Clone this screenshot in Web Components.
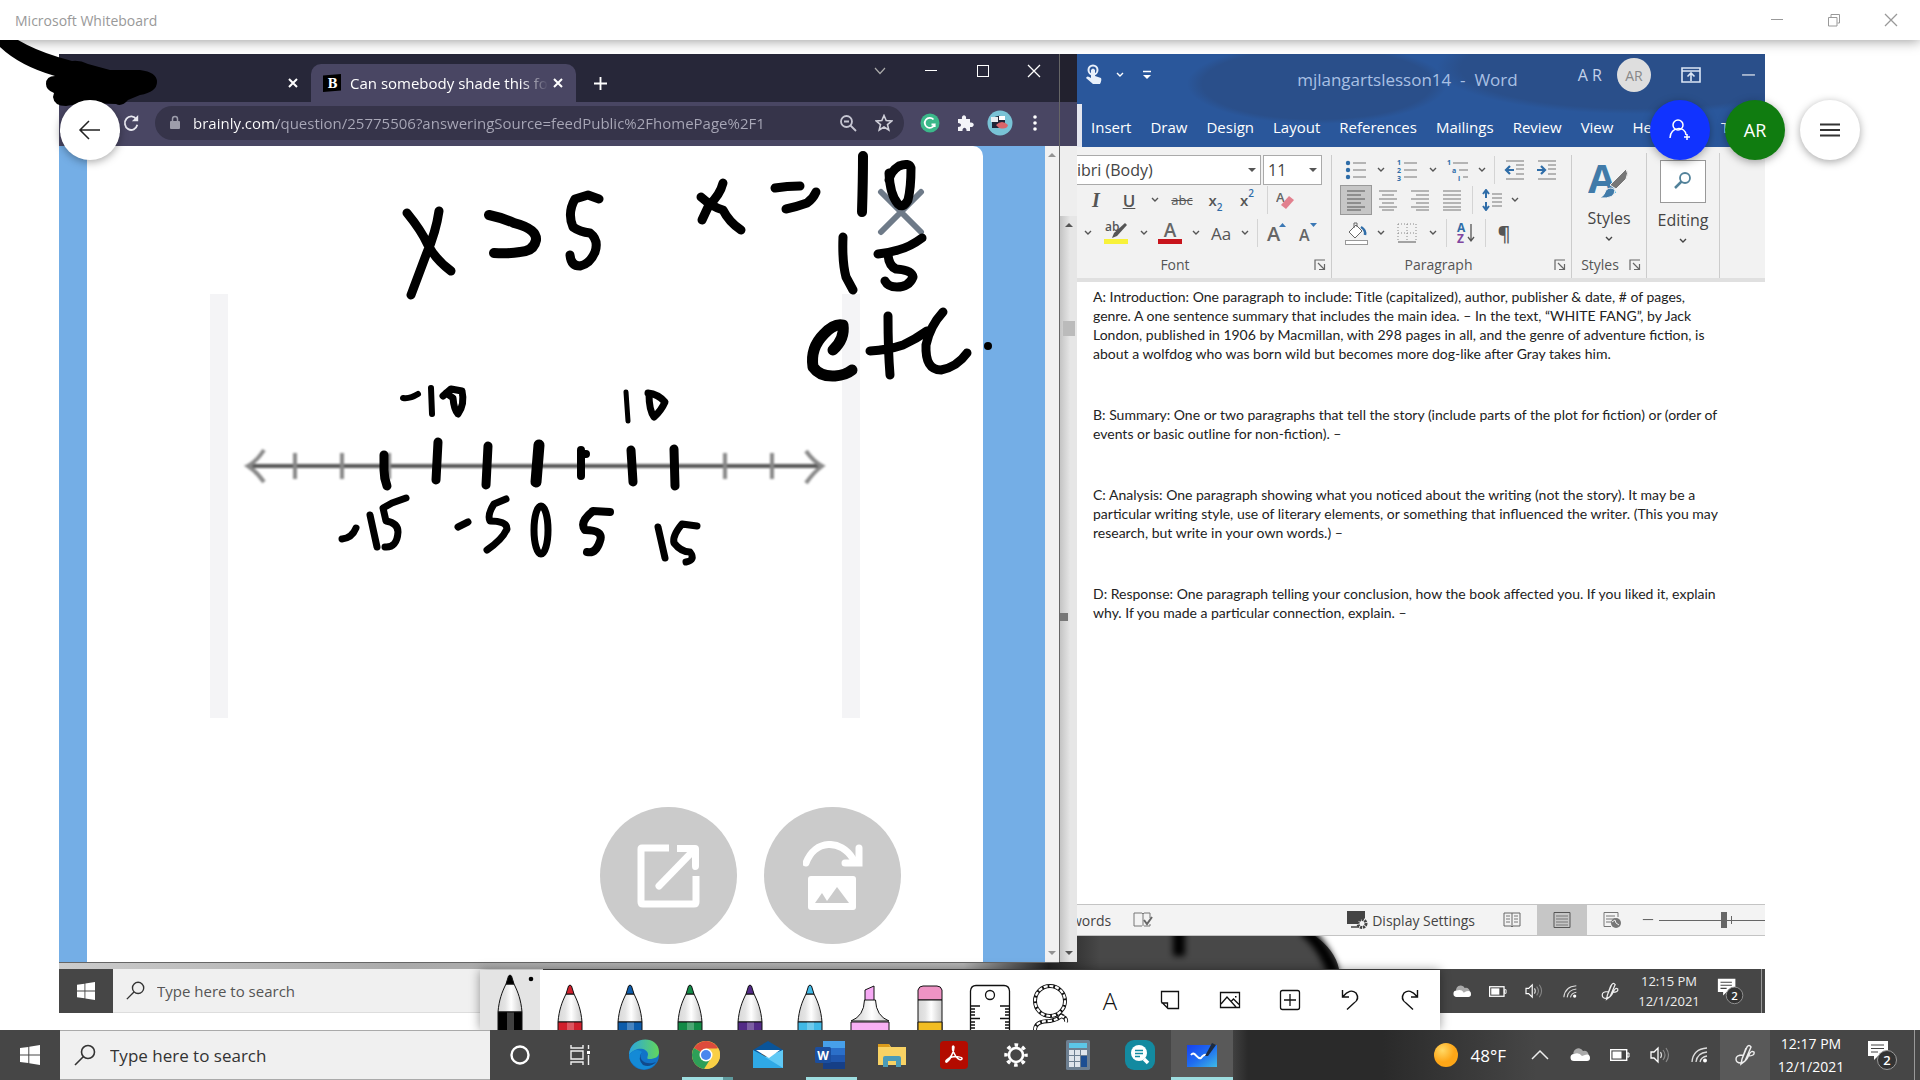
<!DOCTYPE html>
<html lang="en">
<head>
<meta charset="utf-8">
<title>Microsoft Whiteboard</title>
<style>
  html, body {
    margin: 0;
    height: 100%;
  }

  body {
    display: flex;
    flex-direction: column;
    background: #fff;
    font-family: "Open Sans", "Noto Sans", sans-serif;
    overflow: hidden;
  }
</style>
</head>
<body>

<app-titlebar>Microsoft Whiteboard</app-titlebar>

<white-board>
  <desktop-shot>
    <chrome-window slot="browser"></chrome-window>
    <word-window slot="editor">
      <p>A: Introduction: One paragraph to include: Title (capitalized), author, publisher &amp; date, # of pages,<br>genre. A one sentence summary that includes the main idea. – In the text, “WHITE FANG”, by Jack<br>London, published in 1906 by Macmillan, with 298 pages in all, and the genre of adventure fiction, is<br>about a wolfdog who was born wild but becomes more dog-like after Gray takes him.</p>
      <p>B: Summary: One or two paragraphs that tell the story (include parts of the plot for fiction) or (order of<br>events or basic outline for non-fiction). –</p>
      <p>C: Analysis: One paragraph showing what you noticed about the writing (not the story). It may be a<br>particular writing style, use of literary elements, or something that influenced the writer. (This you may<br>research, but write in your own words.) –</p>
      <p>D: Response: One paragraph telling your conclusion, how the book affected you. If you liked it, explain<br>why. If you made a particular connection, explain. –</p>
    </word-window>
  </desktop-shot>
  <ink-layer slot="ink"></ink-layer>
  <round-button slot="back" label="Back"><ui-icon name="back" w="24" h="24"></ui-icon></round-button>
  <round-button slot="actions" label="Invite" style="--bg: #1133ff; --fg: #fff"><ui-icon name="invite" w="24" h="24"></ui-icon></round-button>
  <round-button slot="actions" label="Account" style="--bg: #107c10; --fg: #fff">AR</round-button>
  <round-button slot="actions" label="Menu"><ui-icon name="menu" w="24" h="24"></ui-icon></round-button>
  <pen-toolbar slot="tools"></pen-toolbar>
</white-board>

<task-bar></task-bar>

<script>
// width and height of each drawing come first, then its markup
const pen = (color, y = 0) => `
  <path d="M18 ${y + 37}C19 ${y + 25} 22 ${y + 17} 26 ${y + 9}H34C38 ${y + 17} 41 ${y + 25} 42 ${y + 37}Z" fill="url(#barrel)" stroke="#111"/>
  <path d="M26 ${y + 9}L28.500 ${y + 1}Q30 ${y - 1} 31.500 ${y + 1}L34 ${y + 9}Z" fill="${color}" stroke="#111"/>
  <path d="M18 ${y + 37}H42V61H18Z" fill="${color}" stroke="#111"/>
  <path d="M27 ${y + 37.5}H34V60H27Z" fill="#fff" opacity=".25"/>`
const barrel = '<defs><linearGradient id="barrel"><stop offset="0" stop-color="#d8d8d8"/><stop offset=".3" stop-color="#e4e4e4"/><stop offset=".55" stop-color="#fff"/><stop offset=".8" stop-color="#e2e2e2"/><stop offset="1" stop-color="#ccc"/></linearGradient></defs>'
const lines = (ys, x1 = 2, x2 = 20) => ys.map(y => `<path d="M${x1} ${y}H${x2}"/>`).join('')
const grey = 'fill="none" stroke="#777"'

const icons = {
  back: [24, 24, '<path d="M22 12H3M11 3L2 12L11 21" fill="none" stroke="#222" stroke-width="1.5"/>'],
  invite: [24, 24, '<g fill="none" stroke="#fff" stroke-width="1.5"><circle cx="10" cy="7" r="5"/><path d="M2 20C2 8 18 8 18 17M16 19H22M19 16V22"/></g>'],
  menu: [24, 24, '<path d="M2 6.500H22M2 12H22M2 17.500H22" stroke="#333" stroke-width="2"/>'],
  minimize: [14, 14, '<path d="M1 6.500H13" stroke="currentColor"/>'],
  maximize: [14, 14, '<rect x="1.500" y="1.500" width="11" height="11" fill="none" stroke="currentColor"/>'],
  restore: [14, 14, '<path d="M1.500 4.500H10V13H1.500ZM4 4V1.500H12.500V10H10.500" fill="none" stroke="currentColor"/>'],
  close: [14, 14, '<path d="M1 1L13 13M13 1L1 13" stroke="currentColor" stroke-width="1.300"/>'],
  cross: [10, 10, '<path d="M1 1L9 9M9 1L1 9" stroke="currentColor" stroke-width="2"/>'],
  plus: [14, 14, '<path d="M7 0V14M0 7H14" stroke="currentColor" stroke-width="2"/>'],
  chevron: [12, 12, '<path d="M1 3L6 8.500L11 3" fill="none" stroke="#aaa" stroke-width="1.200"/>'],
  chevronUp: [18, 12, '<path d="M1 10L9 2L17 10" fill="none" stroke="#eee" stroke-width="1.500"/>'],
  smallChevron: [8, 8, '<path d="M1 2L4 5L7 2" fill="none" stroke="currentColor" stroke-width="1.400"/>'],
  reload: [20, 20, '<path d="M16 6A7 7.500 0 1 0 17 12" fill="none" stroke="#e8e8f0" stroke-width="2"/><path d="M18 1V8H11Z" fill="#e8e8f0"/>'],
  lock: [12, 16, '<rect x="1" y="6" width="10" height="8" rx="1" fill="#9d9dab"/><path d="M3.500 6V4A2.500 2.500 0 0 1 8.500 4V6" fill="none" stroke="#9d9dab" stroke-width="1.500"/>'],
  lens: [18, 18, '<g fill="none" stroke="#c6c6d2" stroke-width="1.800"><circle cx="7.500" cy="7.500" r="5.500"/><path d="M11.500 11.500L17 17M5 7.500H10"/></g>'],
  star: [18, 18, '<path d="M9 1.500L11.200 6.500L16.700 7L12.500 10.600L13.800 16L9 13L4.200 16L5.500 10.600L1.300 7L6.800 6.500Z" fill="none" stroke="#d0d0da" stroke-width="1.600"/>'],
  grammarly: [20, 20, '<circle cx="10" cy="10" r="9.500" fill="#3bb88a"/><path d="M13.500 6.500A5 5 0 1 0 14.500 11.500H11.500M14.700 11V14" fill="none" stroke="#fff" stroke-width="1.800"/>'],
  puzzle: [18, 18, '<path d="M2 5H6C5 0 11 0 10 5H14V8.500C19 7.500 19 14 14 13V17H10.500C11 12.500 6 12.500 6.500 17H2V13C6 13 6 9 2 9Z" fill="#f4f4f8"/>'],
  face: [26, 26, '<circle cx="13" cy="13" r="12.500" fill="#79c3d6"/><path d="M5 9Q12 3 18 8V18H5Z" fill="#202638"/><rect x="4" y="7" width="7" height="5" fill="#e8eef2"/><rect x="12" y="6" width="6" height="4" fill="#fff"/><path d="M9 15Q15 9 21 15Q20 20 12 18Z" fill="#d9656a"/>'],
  dots: [6, 18, '<g fill="#fff"><circle cx="3" cy="3" r="1.800"/><circle cx="3" cy="9" r="1.800"/><circle cx="3" cy="15" r="1.800"/></g>'],
  favicon: [18, 18, '<path d="M0 1.500L18 0V16.500L0 18Z" fill="#000"/><text x="9.500" y="13.500" text-anchor="middle" font-family="DejaVu Serif" font-weight="700" font-size="12" fill="#fff">B</text>'],
  dismiss: [48, 48, '<path d="M4 4L44 44M44 4L4 44" stroke="#6e7a88" stroke-width="6" stroke-linecap="round"/>'],
  external: [64, 64, '<g fill="none" stroke="#fff" stroke-width="7" stroke-linejoin="round"><path d="M32 4H5Q4 4 4 5V58Q4 60 6 60H57Q59 60 59 58V32"/><path d="M22 42L57 6" stroke-linecap="round"/></g><path d="M40 1H58Q62 1 62 5V22Q62 26 58 26Q55 26 55 22V8H40Z" fill="#fff"/>'],
  rotate: [60, 70, '<path d="M3 22C12 -2 38 -2 50 18" fill="none" stroke="#fff" stroke-width="7" stroke-linecap="round"/><path d="M56 7V22H42" fill="none" stroke="#fff" stroke-width="7" stroke-linecap="round"/><rect x="5" y="35" width="48" height="34" rx="3" fill="#fff"/><path d="M12 62L19 52L24 60L34 46L46 62Z" fill="#cbcbcb"/>'],

  touch: [18, 22, '<circle cx="8" cy="6" r="4.500" fill="none" stroke="#e8f0fa" stroke-width="2"/><path d="M6 6Q8 3 10 6V12L16 14Q17 16 15 20H8L1 14Q2 11 6 14Z" fill="#e8f0fa"/>'],
  quick: [10, 10, '<path d="M1 1.500H9" stroke="#fff" stroke-width="1.500"/><path d="M1 5H9L5 9Z" fill="#fff"/>'],
  ribbonMode: [20, 16, '<path d="M1 1H19V15H1ZM1 4H19M10 14V6M6.500 9.500L10 6L13.500 9.500" fill="none" stroke="#dbe6f5" stroke-width="1.600"/>'],
  caret: [8, 6, '<path d="M0 1H8L4 5Z" fill="#555"/>'],
  eraserA: [20, 20, '<text x="0" y="12" font-family="Open Sans" font-weight="600" font-size="13" fill="#666">A</text><path d="M5 15L13 6L18 10L10 19Z" fill="#e2808e"/>'],
  highlighter: [26, 24, '<text x="2" y="10" font-family="Open Sans" font-size="12" fill="#555">ab</text><path d="M9 17L11 12L22 2L24 4L14 15Z" fill="#555"/><rect x="1" y="18" width="24" height="5" fill="#f8f23a"/>'],
  fontColor: [26, 24, '<text x="13" y="16" text-anchor="middle" font-family="Open Sans" font-weight="600" font-size="19" fill="#666">A</text><rect x="1" y="18" width="24" height="5" fill="#c8141c"/>'],
  growA: [24, 24, '<text x="2" y="20" font-family="Open Sans" font-weight="600" font-size="20" fill="#666">A</text><path d="M14 6L17.500 2L21 6Z" fill="#3b78b5"/>'],
  shrinkA: [24, 24, '<text x="2" y="20" font-family="Open Sans" font-weight="600" font-size="16" fill="#666">A</text><path d="M13 2H20L16.500 6Z" fill="#3b78b5"/>'],
  bullets: [22, 22, `<g fill="#2f6da8"><circle cx="3" cy="4" r="2.200"/><circle cx="3" cy="11" r="2.200"/><circle cx="3" cy="18" r="2.200"/></g><g ${grey}>${lines([4, 11, 18], 8, 21)}</g>`],
  numbers: [22, 22, `<g fill="#2f6da8" font-family="Open Sans" font-size="7" font-weight="700"><text x="1" y="6">1</text><text x="1" y="14">2</text><text x="1" y="22">3</text></g><g ${grey}>${lines([4, 11, 18], 8, 21)}</g>`],
  levels: [22, 22, `<g fill="#2f6da8" font-family="Open Sans" font-size="7" font-weight="700"><text x="0" y="6">1</text><text x="5" y="14">a</text><text x="11" y="22">i</text></g><g ${grey}>${lines([4], 6, 21)}${lines([11], 12, 21)}${lines([18], 16, 21)}</g>`],
  outdent: [22, 22, `<g ${grey}>${lines([2, 20])}${lines([6, 10, 15], 12, 20)}</g><path d="M10 11H3M6 7L2 11L6 15" fill="none" stroke="#2f6da8" stroke-width="2.200"/>`],
  indent: [22, 22, `<g ${grey}>${lines([2, 20])}${lines([6, 10, 15], 12, 20)}</g><path d="M1 11H8M5 7L9 11L5 15" fill="none" stroke="#2f6da8" stroke-width="2.200"/>`],
  left: [22, 22, `<g fill="none" stroke="#555">${lines([2, 10, 18])}${lines([6, 14, 21], 2, 16)}</g>`],
  center: [22, 22, `<g ${grey}>${lines([2, 10, 18])}${lines([6, 14, 21], 5, 17)}</g>`],
  right: [22, 22, `<g ${grey}>${lines([2, 10, 18])}${lines([6, 14, 21], 7, 20)}</g>`],
  justify: [22, 22, `<g ${grey}>${lines([2, 6, 10, 14, 18, 21])}</g>`],
  spacing: [22, 22, `<path d="M5 1V9M5 13V21M2 5L5 1L8 5M2 17L5 21L8 17" fill="none" stroke="#2f6da8" stroke-width="2"/><g ${grey}>${lines([5, 9, 13, 17], 11, 21)}</g>`],
  bucket: [24, 24, '<path d="M5 11L12 4L18 10L11 17Z" fill="#fff" stroke="#666"/><path d="M10 7V2H13V6" fill="none" stroke="#666"/><path d="M17 6Q22 9 21 14" fill="none" stroke="#2f6da8" stroke-width="2.500"/><rect x="1.500" y="19.500" width="22" height="4" fill="#fff" stroke="#999"/>'],
  borders: [20, 20, '<path d="M1 1H19V19M1 1V19M10 1V19M1 10H19" fill="none" stroke="#888" stroke-dasharray="1 2"/><path d="M1 19H19" stroke="#555"/>'],
  sort: [20, 22, '<g font-family="Open Sans" font-weight="700" font-size="12"><text x="1" y="10" fill="#2f6da8">A</text><text x="1" y="21" fill="#8046a0">Z</text></g><path d="M15 2V19M12 15L15 19L18 15" fill="none" stroke="#555" stroke-width="1.300"/>'],
  launcher: [12, 12, '<path d="M1 11V1H11M4 4L10 10M10.500 5V10.500H5" fill="none" stroke="#666" stroke-width="1.200"/>'],
  stylesA: [42, 40, '<text x="0" y="32" font-family="Open Sans" font-weight="700" font-size="40" fill="#417ba9">A</text><path d="M22 24L38 8Q41 12 38 18L28 28Z" fill="#777" stroke="#f3f3f3"/><path d="M12 37Q17 34 18 29Q23 25 27 29Q27 38 12 37Z" fill="#417ba9" stroke="#f3f3f3"/>'],
  find: [20, 20, '<circle cx="12" cy="7" r="5" fill="none" stroke="#52829a" stroke-width="1.800"/><path d="M8.500 10.500L2 17" stroke="#52829a" stroke-width="2.500"/>'],
  proof: [20, 18, '<path d="M10 3V15M1 2H9L10 3L11 2H17V7M1 2V15H9M17 13V15H11" fill="none" stroke="#777"/><path d="M11 9L14 13L19 6" fill="none" stroke="#666" stroke-width="2"/>'],
  display: [22, 20, '<path d="M0 1H18V8L12 14H0Z" fill="#444"/><path d="M4 17H12" stroke="#444" stroke-width="1.500"/><circle cx="15" cy="13.500" r="4" fill="#f3f3f3" stroke="#444" stroke-width="3" stroke-dasharray="2.200 .8"/>'],
  read: [18, 16, `<path d="M1 1H17V14H10L9 15L8 14H1ZM9 1V15" fill="none" stroke="#666"/><g ${grey}>${lines([4, 7, 10], 3, 7)}${lines([4, 7, 10], 11, 15)}</g>`],
  print: [18, 16, `<path d="M1 .5H17V15.500H1Z" fill="none" stroke="#555"/><g ${grey}>${lines([4, 7, 10, 13], 3, 15)}</g>`],
  web: [18, 16, `<path d="M8 14.500H1V.5H15V5" fill="none" stroke="#777"/><g ${grey}>${lines([4, 7, 10], 3, 12)}</g><circle cx="13" cy="11" r="5" fill="#777"/><path d="M9 10L12 8L13 11L16 13" fill="none" stroke="#eee"/>`],

  windows: [20, 20, '<path d="M0 3L8.300 2V9.500H0ZM9.300 1.800L20 0V9.500H9.300ZM0 10.500H8.300V18L0 17ZM9.300 10.500H20V20L9.300 18.200Z" fill="#fff"/>'],
  search: [22, 22, '<g fill="none" stroke="#333" stroke-width="1.600"><circle cx="14" cy="8" r="6.500"/><path d="M9.500 12.500L1 21"/></g>'],
  cortana: [22, 22, '<circle cx="11" cy="11" r="8.500" fill="none" stroke="#fff" stroke-width="2.400"/>'],
  taskView: [22, 22, '<path d="M2 1V4H14V1M2 21V18H14V21M2 7H14V15H2ZM19.500 1V5M19.500 11V21" fill="none" stroke="#f0f0f0" stroke-width="1.400"/><rect x="18" y="7" width="3" height="3" fill="#fff"/>'],
  edge: [32, 32, '<defs><linearGradient id="e1" x2="1"><stop stop-color="#2ba5df"/><stop offset="1" stop-color="#62d65c"/></linearGradient></defs><circle cx="16" cy="16" r="15" fill="#1173c8"/><path d="M1 16C2 -4 31 -4 31 13C31 18 27 20 21 20C18 20 20 18 20 15C19 9 8 7 1 16Z" fill="url(#e1)"/><path d="M1 16Q8 8 14 13C8 20 15 28 27 25Q19 33 10 29Q1 24 1 16Z" fill="#148ad6"/><path d="M14 13C9 21 18 27 28 23Q22 29 15 26Q9 20 14 13Z" fill="#114a8c"/>'],
  chrome: [28, 28, '<circle cx="14" cy="14" r="14" fill="#f9cf45"/><path d="M14 14L1.900 7A14 14 0 0 1 26.100 7Z" fill="#dd4b3c"/><path d="M14 14L1.900 7A14 14 0 0 0 12 27.900L19 17Z" fill="#2e9f58"/><path d="M14 7.500H26.400A14 14 0 0 1 14 28L19.500 17Z" fill="#f9cf45"/><circle cx="14" cy="14" r="6.500" fill="#fff"/><circle cx="14" cy="14" r="5" fill="#4a87ee"/>'],
  mail: [30, 28, '<path d="M0 9L15 0L30 9V13H0Z" fill="#0a5499"/><path d="M0 9L15 17L30 9V27H0Z" fill="#2fa9e6"/><path d="M30 9V27L12 16Z" fill="#60c9f5"/><path d="M3 9H27L16 17Z" fill="#fff"/>'],
  word: [30, 28, '<path d="M8 0H30V28H8Z" fill="#2b6fc9"/><path d="M8 0H30V7H8Z" fill="#47a0ea"/><path d="M8 14H30V21H8Z" fill="#1f56ad"/><path d="M8 21H30V28H8Z" fill="#163f86"/><rect y="6" width="16" height="16" rx="1.500" fill="#1b4e9e"/><text x="8" y="18.500" text-anchor="middle" font-family="Open Sans" font-weight="700" font-size="12" fill="#fff">W</text>'],
  files: [28, 24, '<path d="M0 1H11L13 4H28V22H0Z" fill="#f8d264"/><path d="M0 1H11L12 4H0Z" fill="#d99a1c"/><path d="M5 24V15Q5 13 7 13H21Q23 13 23 15V24H18V18H10V24Z" fill="#4b9bb8"/>'],
  acrobat: [28, 28, '<rect width="28" height="28" rx="4" fill="#b30b00"/><path d="M6 20C10 18 14 12 14 6C13 3 11 7 14 12C16 17 20 20 22 18C23 16 16 15 12 16C8 17 5 20 6 21C7 22 10 18 11 16" fill="none" stroke="#fff" stroke-width="1.500"/>'],
  gear: [24, 24, '<circle cx="12" cy="12" r="7" fill="none" stroke="#fff" stroke-width="2.600"/><circle cx="12" cy="12" r="10" fill="none" stroke="#fff" stroke-width="3.500" stroke-dasharray="3.600 4.254" stroke-dashoffset="1.800"/>'],
  calc: [24, 30, '<rect width="24" height="30" rx="1.500" fill="#6d7f91"/><rect x="3" y="3" width="18" height="5" fill="#5cc6e8"/><g fill="#dfe5ec"><rect x="3" y="10" width="5" height="5"/><rect x="9" y="10" width="5" height="5"/><rect x="15" y="10" width="6" height="5"/><rect x="3" y="16" width="5" height="5"/><rect x="9" y="16" width="5" height="5"/><rect x="3" y="22" width="5" height="5"/><rect x="9" y="22" width="5" height="5"/></g><rect x="15" y="16" width="6" height="11" fill="#1c4e92"/>'],
  quickAssist: [30, 30, '<rect width="30" height="30" rx="9" fill="#138aa0"/><circle cx="14" cy="13" r="8" fill="#fff"/><path d="M19 19L23 23" stroke="#fff" stroke-width="3.500"/><path d="M10 10.500H18M10 13.500H18M10 16.500H15" stroke="#138aa0" stroke-width="1.500"/>'],
  board: [32, 28, '<defs><linearGradient id="wb" x2="1" y2="1"><stop stop-color="#1740f0"/><stop offset=".5" stop-color="#1f6df0"/><stop offset="1" stop-color="#3fb9e4"/></linearGradient></defs><rect x="1" y="4" width="30" height="22" fill="url(#wb)"/><path d="M5 14C9 9 11 19 15 17Q18 13 20 14" fill="none" stroke="#fff" stroke-width="2"/><path d="M19 15L26 2L30 4L22 15Z" fill="#1d2b40"/>'],
  sun: [24, 24, '<defs><radialGradient id="sg" cx=".35" cy=".3"><stop stop-color="#ffd966"/><stop offset="1" stop-color="#fda617"/></radialGradient></defs><circle cx="12" cy="12" r="12" fill="url(#sg)"/>'],
  cloud: [20, 14, '<path d="M4 8A5 5 0 0 1 13 3Q18 2 19 8Z" fill="#aaa"/><path d="M4 13A3.500 3.500 0 0 1 4 6Q9 4 12 8Q20 4 20 10Q20 13 17 13Z" fill="#fff"/>'],
  battery: [20, 12, '<rect x=".7" y=".7" width="16" height="10.600" fill="none" stroke="#fff" stroke-width="1.400"/><rect x="2.500" y="2.500" width="9" height="7" fill="#fff"/><path d="M17 4H19V8H17Z" fill="none" stroke="#fff"/>'],
  sound: [20, 18, '<path d="M1 6H4L8 2V16L4 12H1Z" fill="none" stroke="#fff" stroke-width="1.300"/><path d="M10.500 6Q12.500 9 10.500 12" fill="none" stroke="#ddd" stroke-width="1.200"/><path d="M13 4Q17 9 13 14M16 2Q21 9 16 16" fill="none" stroke="#888" stroke-width="1.200"/>'],
  wifi: [18, 18, '<g fill="none" stroke="#ddd" stroke-width="1.300"><path d="M1 16Q2 3 16 2M5 16Q6 7 16 6M9 16Q10 11 16 10"/></g><circle cx="14" cy="14.500" r="2" fill="#fff"/>'],
  penHand: [20, 22, '<path d="M7 15L12 3Q14 0 16 3L10 17L6 20ZM11 4L7 15M8 11Q1 11 1 15Q1 19 6 19Q11 18 14 11Q16 6 19 8Q20 12 13 12" fill="none" stroke="#eee" stroke-width="1.400"/>'],
  notice: [32, 32, '<path d="M1 2H21V17H11L7 21V17H1Z" fill="#fff"/><path d="M4 6H17M4 9.500H17M4 13H11" stroke="#444" stroke-width="1.200"/><circle cx="20" cy="21" r="9.500" fill="#333" stroke="#999"/><text x="20" y="26" text-anchor="middle" font-family="Open Sans" font-weight="600" font-size="13" fill="#fff">2</text>'],

  penBlack: [60, 60, barrel + pen('#000', 5) + '<circle cx="51" cy="9" r="2.300"/>'],
  penRed: [60, 60, barrel + pen('#d01f2c', 15)],
  penBlue: [60, 60, barrel + pen('#0c5cab', 15)],
  penGreen: [60, 60, barrel + pen('#128a46', 15)],
  penPurple: [60, 60, barrel + pen('#522a86', 15)],
  penSky: [60, 60, barrel + pen('#40b8e6', 15)],
  marker: [60, 60, barrel + '<path d="M25 30V20L34 16V30" fill="#f6a9f4" stroke="#111"/><path d="M24.500 30H35.500Q36 46 49 51H11Q24 46 24.500 30Z" fill="url(#barrel)" stroke="#111"/><path d="M11 52H49V61H11Z" fill="#f8b0f4" stroke="#111"/>'],
  rubber: [60, 60, barrel + '<path d="M18 30V20Q19 16 23 16H37Q41 16 42 20V30Z" fill="#ee93c4" stroke="#111"/><path d="M18 30H42V61H18Z" fill="url(#barrel)" stroke="#111"/><path d="M18 52H42V61H18Z" fill="#f2bd22" stroke="#111"/>'],
  ruler: [60, 60, '<path d="M10.500 61V21Q11 15.500 16 15.500H44Q49 15.500 49.500 21V61" fill="#fff" stroke="#111" stroke-width="1.300"/><circle cx="30" cy="25" r="4.500" fill="none" stroke="#111" stroke-width="1.300"/><path d="M11 36H20M11 39H15M11 42H15M11 45H15M11 48.500H20M11 52H15M11 55H15M11 58H15M49 36H40M49 39H45M49 42H45M49 45H45M49 48.500H40M49 52H45M49 55H45M49 58H45" stroke="#111" stroke-width="1.300"/>'],
  lasso: [60, 60, '<g fill="none" stroke="#111" stroke-width="4"><circle cx="30" cy="31" r="15"/><path d="M15 60Q15 51 30 51Q40 49 43 44M40 46Q47 47 46 52"/></g><g fill="none" stroke="#fff" stroke-width="2.200" stroke-dasharray="4 1.800"><circle cx="30" cy="31" r="15"/><path d="M15 60Q15 51 30 51Q40 49 43 44M40 46Q47 47 46 52"/></g>'],
  letter: [60, 60, '<text x="30" y="40" text-anchor="middle" font-family="Open Sans" font-size="24" font-weight="300" fill="#111">A</text>'],
  note: [60, 60, '<path d="M21.500 21.500H38.500V38.500H28L21.500 32ZM21.500 33H27.500V38.500" fill="none" stroke="#111" stroke-width="1.300"/>'],
  picture: [60, 60, '<path d="M20.500 22.500H39.500V37.500H20.500ZM21 34L27 27L36 37M31 31.500L33.500 29L39 34.500" fill="none" stroke="#111" stroke-width="1.300"/><path d="M35 26H36.500V27.500H35Z"/>'],
  insert: [60, 60, '<rect x="20.500" y="20.500" width="19" height="19" rx="2" fill="none" stroke="#111" stroke-width="1.300"/><path d="M24 30H36M30 24V36" stroke="#111" stroke-width="1.300"/>'],
  undo: [60, 60, '<path d="M22.500 20V27H29M23 26.500Q30 18 36 23Q40 29 34 33L27 39.500" fill="none" stroke="#111" stroke-width="1.400"/>'],
  redo: [60, 60, '<path d="M37.500 20V27H31M37 26.500Q30 18 24 23Q20 29 26 33L33 39.500" fill="none" stroke="#111" stroke-width="1.400"/>']
}

// Every element renders its own markup once, into an open root
class BaseElement extends HTMLElement {
  constructor () {
    super()
    this.attachShadow({ mode: 'open' })
  }

  connectedCallback () {
    const template = document.createElement('template')
    template.innerHTML = `
      <style>
        *, :after, :before { box-sizing: border-box; }
        button {
          display: flex;
          align-items: center;
          justify-content: center;
          margin: 0;
          padding: 0;
          border: 0;
          background: none;
          color: inherit;
          font: inherit;
        }
      </style>${this.render()}`
    this.shadowRoot.replaceChildren(template.content.cloneNode(true))
  }
}

class UiIcon extends BaseElement {
  render () {
    const [w, h, body] = icons[this.getAttribute('name')]
    const width = this.getAttribute('w') || w
    const height = this.getAttribute('h') || h
    return `
      <style>
        :host { display: inline-flex; flex: none; }
        svg { display: block; }
      </style>
      <svg width="${width}" height="${height}" viewBox="0 0 ${w} ${h}" aria-hidden="true">${body}</svg>`
  }
}
customElements.define('ui-icon', UiIcon)

const icon = (name, w = '', h = '') => `<ui-icon name="${name}" w="${w}" h="${h}"></ui-icon>`
const button = (name, label, width, w, h) =>
  `<button type="button" aria-label="${label}" style="width: ${width}px">${icon(name, w, h)}</button>`

class AppTitlebar extends BaseElement {
  render () {
    return `
      <style>
        :host {
          display: flex;
          flex: none;
          align-items: center;
          height: 40px;
          padding-left: 15px;
          background: #fff;
          color: #999;
          font-size: 14px;
          position: relative;
          z-index: 2;
          box-shadow: 0 1px 12px rgba(0, 0, 0, .4);
        }
        nav { display: flex; margin-left: auto; padding-right: 1px; }
        nav button { height: 40px; }
      </style>
      <slot></slot>
      <nav>
        ${button('minimize', 'Minimize', 57)}
        ${button('restore', 'Restore', 57)}
        ${button('close', 'Close', 57)}
      </nav>`
  }
}
customElements.define('app-titlebar', AppTitlebar)

class WhiteBoard extends BaseElement {
  render () {
    return `
      <style>
        :host {
          display: block;
          flex: 1;
          min-height: 0;
          position: relative;
          overflow: hidden;
        }
        .sheet {
          display: flex;
          height: 100%;
          padding: 14px 155px 17px 59px;
        }
        .back, .actions { position: absolute; top: 60px; display: flex; gap: 15px; }
        .back { left: 60px; }
        .actions { right: 60px; }
        .tools {
          position: absolute;
          left: 0;
          right: 0;
          bottom: 0;
          display: flex;
          justify-content: center;
        }
      </style>
      <div class="sheet"><slot></slot></div>
      <slot name="ink"></slot>
      <div class="back"><slot name="back"></slot></div>
      <div class="actions"><slot name="actions"></slot></div>
      <div class="tools"><slot name="tools"></slot></div>`
  }
}
customElements.define('white-board', WhiteBoard)

class RoundButton extends BaseElement {
  render () {
    return `
      <style>
        :host { display: block; }
        button {
          width: 60px;
          height: 60px;
          border-radius: 50%;
          background: var(--bg, #fff);
          color: var(--fg, #333);
          font-size: 18px;
          box-shadow: 0 2px 8px rgba(0, 0, 0, .35);
        }
      </style>
      <button type="button" aria-label="${this.getAttribute('label')}"><slot></slot></button>`
  }
}
customElements.define('round-button', RoundButton)

class DesktopShot extends BaseElement {
  render () {
    return `
      <style>
        :host {
          display: flex;
          flex: 1;
          flex-direction: column;
          min-width: 0;
        }
        .windows {
          display: flex;
          flex: 1;
          min-height: 0;
          position: relative;
        }
        .wallpaper {
          position: absolute;
          left: 0;
          bottom: 0;
          width: 100%;
          height: 33px;
        }
        slot[name=browser]::slotted(*) { flex: 1000; min-width: 0; margin-bottom: 7px; }
        slot[name=editor]::slotted(*) { flex: 688; min-width: 0; margin-bottom: 33px; }
        .behind {
          display: flex;
          flex: none;
          flex-direction: column;
          align-items: center;
          width: 18px;
          margin-bottom: 7px;
          border-left: 1px solid #666;
          background: linear-gradient(90deg, #c4c4c4, #e6e6e6 60%);
          position: relative;
        }
        .behind:before {
          content: "";
          align-self: stretch;
          height: 162px;
          background: linear-gradient(#22212e 48px, #45425f 48px 92px, #eee 92px);
        }
        .thumb { width: 12px; height: 15px; margin-top: 93px; background: #bbb; }
        .split { align-self: flex-start; width: 8px; height: 8px; margin-top: 277px; background: #777; }
        .behind ui-icon:first-of-type { margin-top: 6px; transform: rotate(180deg); }
        .behind ui-icon:last-of-type { margin: auto 0 6px; }
      </style>
      <div class="windows">
        <svg class="wallpaper" viewBox="0 0 1706 33" preserveAspectRatio="none">
          <defs>
            <linearGradient id="wall"><stop offset="0" stop-color="#ccc"/><stop offset=".2" stop-color="#aaa"/><stop offset=".53" stop-color="#b4b4b4"/><stop offset=".58" stop-color="#222"/><stop offset=".61" stop-color="#484848"/></linearGradient>
            <filter id="soft" filterUnits="userSpaceOnUse" x="1000" y="-30" width="400" height="90"><feGaussianBlur stdDeviation="3"/></filter>
          </defs>
          <rect width="1706" height="33" fill="url(#wall)"/>
          <path d="M0 26.500H1000" stroke="#666"/>
          <path d="M1120 -8V20" stroke="#000" stroke-width="12" filter="url(#soft)"/>
          <path d="M1256 0Q1276 14 1280 33H1706V0Z" fill="#fff"/>
          <path d="M1245 -6Q1264 8 1275 38" stroke="#000" fill="none" stroke-width="12" filter="url(#soft)"/>
        </svg>
        <slot name="browser"></slot>
        <div class="behind">
          ${icon('caret')}
          <span class="thumb"></span>
          <span class="split"></span>
          ${icon('caret')}
        </div>
        <slot name="editor"></slot>
      </div>
      <shot-taskbar></shot-taskbar>`
  }
}
customElements.define('desktop-shot', DesktopShot)

class ChromeWindow extends BaseElement {
  render () {
    return `
      <style>
        :host {
          display: flex;
          flex-direction: column;
          position: relative;
          color: #fff;
          font-size: 15px;
        }
        .tabs {
          display: flex;
          flex: none;
          height: 48px;
          padding-top: 10px;
          background: #272739;
        }
        .tab {
          display: flex;
          align-items: center;
          height: 38px;
        }
        .tab.idle { width: 252px; justify-content: flex-end; padding-right: 12px; }
        .tab.active {
          width: 265px;
          padding: 0 8px 0 12px;
          border-radius: 10px 10px 0 0;
          background: #494663;
        }
        .name {
          flex: 1;
          margin-left: 9px;
          overflow: hidden;
          white-space: nowrap;
          -webkit-mask: linear-gradient(90deg, #000 86%, transparent);
          mask: linear-gradient(90deg, #000 86%, transparent);
        }
        .add { width: 48px; height: 38px; }
        .controls { display: flex; height: 14px; margin-left: auto; }
        .bar {
          display: flex;
          flex: none;
          align-items: center;
          height: 44px;
          padding: 0 7px 2px 62px;
          background: #494663;
        }
        .omnibox {
          display: flex;
          flex: 1;
          align-items: center;
          height: 34px;
          margin: 0 8px 0 14px;
          padding: 0 2px 0 14px;
          border-radius: 17px;
          background: #36344a;
        }
        .omnibox input {
          flex: 1;
          min-width: 0;
          margin-left: 12px;
          padding: 0;
          border: 0;
          outline: 0;
          font: inherit;
          background: linear-gradient(90deg, #fff 84px, #a9a8b8 84px);
          -webkit-background-clip: text;
          background-clip: text;
          -webkit-text-fill-color: transparent;
        }
        .page {
          display: flex;
          flex: 1;
          min-height: 0;
          background: #74aee6;
        }
        .card {
          flex: 1;
          margin: 0 62px 0 28px;
          border-radius: 0 10px 0 0;
          background: #fff;
        }
        .card header { display: flex; justify-content: flex-end; height: 148px; padding: 42px 58px 0 0; }
        .card header button { height: 48px; }
        figure {
          height: 424px;
          margin: 0 123px 89px;
          border: solid #f4f4f6;
          border-width: 0 18px;
        }
        figure svg { display: block; width: 100%; height: 64px; }
        figure:before { content: ""; display: block; height: 140px; }
        .tools { display: flex; justify-content: flex-end; gap: 27px; padding-right: 82px; }
        .tools button { width: 137px; height: 137px; border-radius: 50%; background: #cbcbcb; }
        .scroll {
          display: flex;
          flex-direction: column;
          justify-content: space-between;
          align-items: center;
          width: 14px;
          padding: 6px 0;
          background: #f1f1f1;
        }
        .scroll ui-icon { opacity: .6; }
        .scroll ui-icon:first-child { transform: rotate(180deg); }
      </style>
      <div class="tabs" role="tablist">
        <div class="tab idle">${button('cross', 'Close tab', 12)}</div>
        <div class="tab active" role="tab">${icon('favicon')}<span class="name">Can somebody shade this fo</span>${button('cross', 'Close tab', 20)}</div>
        <button type="button" class="add" aria-label="New tab">${icon('plus', 13, 13)}</button>
        <div class="controls">
          ${button('chevron', 'Search tabs', 50)}
          ${button('minimize', 'Minimize', 52)}
          ${button('maximize', 'Maximize', 51)}
          ${button('close', 'Close', 51)}
        </div>
      </div>
      <div class="bar">
        ${button('reload', 'Reload', 20, 18, 18)}
        <div class="omnibox">
          ${icon('lock')}
          <input type="text" aria-label="Address" value="brainly.com/question/25775506?answeringSource=feedPublic%2FhomePage%2F1">
          ${button('lens', 'Zoom', 36)}
          ${button('star', 'Bookmark', 36)}
        </div>
        ${button('grammarly', 'Grammarly', 35)}
        ${button('puzzle', 'Extensions', 35)}
        ${button('face', 'Profile', 35)}
        ${button('dots', 'More', 35)}
      </div>
      <div class="page">
        <div class="card">
          <header>${button('dismiss', 'Close preview', 48)}</header>
          <figure>
            <svg viewBox="228 434 614 64" preserveAspectRatio="none" role="img" aria-label="Number line">
              <g fill="none" stroke="#555" stroke-width="4" style="filter: blur(1px)">
                <path d="M250 466H822"/>
                <path d="M264 450Q256 462 248 466Q256 471 264 482M806 451Q814 462 822 466Q814 472 806 483" stroke="#888"/>
                <path d="M295 453V479M342 453V479M389 453V479M725 453V479M772 453V479" stroke="#888"/>
              </g>
            </svg>
          </figure>
          <div class="tools">
            <button type="button" aria-label="Open in new tab">${icon('external')}</button>
            <button type="button" aria-label="Rotate image">${icon('rotate')}</button>
          </div>
        </div>
        <div class="scroll">${icon('caret')}${icon('caret')}</div>
      </div>`
  }
}
customElements.define('chrome-window', ChromeWindow)

class WordWindow extends BaseElement {
  render () {
    const chev = (w = 18) => button('smallChevron', 'More options', w, 8, 8)
    const sep = '<i></i>'
    return `
      <style>
        :host {
          display: flex;
          flex-direction: column;
          overflow: hidden;
          background: #fff;
          position: relative;
          color: #444;
          font-size: 15px;
        }
        .head {
          flex: none;
          background: radial-gradient(ellipse 130px 40px at 240px 30px, #2a4f8a 88%, transparent), radial-gradient(ellipse 200px 46px at 560px 14px, #2a4f8a 88%, transparent), #2a579b;
          color: #fff;
        }
        .title { display: flex; align-items: center; height: 50px; padding-bottom: 8px; }
        .title h1 {
          flex: 1;
          margin: 8px 0 0 72px;
          text-align: center;
          white-space: pre;
          font-size: 17px;
          font-weight: 400;
          color: #a9c0e4;
        }
        .user { font-size: 16px; color: #c3d2ea; }
        .avatar {
          display: flex;
          align-items: center;
          justify-content: center;
          width: 34px;
          height: 34px;
          margin: 0 30px 0 15px;
          border-radius: 50%;
          background: #dedede;
          color: #888;
          font-size: 14px;
        }
        .title > button:last-child { margin-left: 30px; }
        .menu { display: flex; gap: 19px; height: 43px; border-left: 5px solid #e4e6ef; padding: 3px 0 0 9px; overflow: hidden; font-size: 15px; }
        .menu button { flex: none; height: 40px; }
        .menu button:last-child { margin-left: 37px; }
        .ribbon {
          display: flex;
          flex: none;
          height: 135px;
          background: #f2f2f2;
          border-bottom: 4px solid #e0e0e0;
        }
        .group { display: flex; flex-direction: column; flex: none; margin: 8px 0 0; border-right: 1px solid #ccc; }
        .group.font { width: 255px; }
        .group.para { width: 240px; padding-left: 8px; }
        .group.styles { width: 75px; margin-top: 6px; }
        .group.editing { width: 73px; margin-top: 6px; }
        .row { display: flex; align-items: center; flex: none; height: 30px; }
        .row:nth-child(3) { height: 36px; }
        .row button { height: 100%; font-weight: 600; color: #555; }
        .row i { width: 1px; height: 28px; margin: 0 4px; background: #d4d4d4; }
        .row button.on { background: #c6c6c6; border: 1px solid #999; }
        .row sub, .row sup { font-size: 10px; line-height: 10px; color: #2f6da8; }
        .row sub { margin-top: 14px; }
        .row sup { margin-bottom: 14px; }
        .foot { display: flex; align-items: center; flex: 1; padding-right: 4px; font-size: 14px; color: #555; }
        .foot span { flex: 1; text-align: center; }
        .font .foot span { margin-right: 40px; }
        .para .foot span { margin-right: 16px; }
        select {
          -webkit-appearance: none;
          appearance: none;
          height: 30px;
          margin: 0;
          padding: 0 4px;
          border: 1px solid #aaa;
          border-radius: 0;
          background: #fff;
          color: #444;
          font: inherit;
          font-size: 16px;
        }
        .pick { position: relative; }
        .pick ui-icon { position: absolute; right: 5px; top: 12px; pointer-events: none; }
        .pick select { width: 100%; }
        .family { width: 184px; margin-right: 2px; }
        .family select { border-left: 0; padding-left: 0; }
        .size { width: 59px; }
        .big { display: flex; flex-direction: column; align-items: center; gap: 6px; height: 98px; font-size: 16px; line-height: 22px; color: #444; }
        .big .box { display: flex; align-items: center; justify-content: center; width: 46px; height: 43px; border: 1px solid #999; background: #fff; }
        .page { flex: 1; min-height: 0; padding: 5px 16px; }
        slot::slotted(p) {
          margin: 0 0 42px;
          color: #222;
          font-family: Lato, "Open Sans", sans-serif;
          font-size: 14px;
          line-height: 19px;
          white-space: nowrap;
        }
        .status {
          display: flex;
          flex: none;
          align-items: center;
          height: 32px;
          border: solid #c4c4c4;
          border-width: 1px 0;
          background: #f3f3f3;
          font-size: 14px;
          overflow: hidden;
        }
        .status > * { flex: none; }
        .words { margin-left: -6px; }
        .status button { height: 30px; }
        .status .on { background: #c6c6c6; }
        .status .display { gap: 3px; margin-left: auto; }
        .zoom { width: 106px; overflow: hidden; display: flex; }
        input[type=range] {
          -webkit-appearance: none;
          appearance: none;
          flex: none;
          width: 130px;
          height: 16px;
          margin: 0;
          background: linear-gradient(#666, #666) 72px 50% / 1px 8px no-repeat, linear-gradient(#666, #666) 0 50% / 100% 1px no-repeat;
        }
        input[type=range]::-webkit-slider-thumb {
          -webkit-appearance: none;
          width: 6px;
          height: 16px;
          background: #666;
        }
      </style>
      <div class="head">
        <div class="title">
          ${button('touch', 'Touch mode', 34)}
          ${button('smallChevron', 'Touch mode options', 18)}
          ${button('quick', 'Customize quick access', 36)}
          <h1>mjlangartslesson14  -  Word</h1>
          <span class="user">A R</span>
          <span class="avatar">AR</span>
          ${button('ribbonMode', 'Ribbon display', 20)}
          ${button('minimize', 'Minimize', 34, 15, 15)}
        </div>
        <div class="menu" role="menubar">
          ${['Insert', 'Draw', 'Design', 'Layout', 'References', 'Mailings', 'Review', 'View', 'Help', 'T'].map(t => `<button type="button" role="menuitem">${t}</button>`).join('')}
        </div>
      </div>
      <div class="ribbon">
        <div class="group font">
          <div class="row">
            <div class="pick family"><select aria-label="Font"><option>ibri (Body)</option></select>${icon('caret')}</div>
            <div class="pick size"><select aria-label="Font size"><option>11</option></select>${icon('caret')}</div>
          </div>
          <div class="row" style="padding-left: 3px">
            <button type="button" style="width: 32px; font: italic 700 20px 'Liberation Serif', serif">I</button>
            <button type="button" style="width: 34px; font-size: 17px; text-decoration: underline">U</button>
            ${chev()}
            <button type="button" style="width: 36px; font-size: 13px; font-weight: 400; text-decoration: line-through">abc</button>
            <button type="button" aria-label="Subscript" style="width: 31px">x<sub>2</sub></button>
            <button type="button" aria-label="Superscript" style="width: 32px">x<sup>2</sup></button>
            ${sep}
            ${button('eraserA', 'Clear formatting', 28)}
          </div>
          <div class="row" style="padding-left: 2px">
            ${chev()}
            ${button('highlighter', 'Highlight', 38)}
            ${chev()}
            ${button('fontColor', 'Font color', 34)}
            ${chev()}
            <button type="button" style="width: 32px; font-size: 17px; font-weight: 400">Aa</button>
            ${chev(16)}
            ${sep}
            ${button('growA', 'Grow font', 30)}
            ${button('shrinkA', 'Shrink font', 34)}
          </div>
          <div class="foot"><span>Font</span>${button('launcher', 'Font dialog', 14)}</div>
        </div>
        <div class="group para">
          <div class="row">
            ${button('bullets', 'Bullets', 32)}
            ${chev()}
            ${button('numbers', 'Numbering', 34)}
            ${chev()}
            ${button('levels', 'Multilevel list', 32)}
            ${chev(16)}
            ${sep}
            ${button('outdent', 'Decrease indent', 32)}
            ${button('indent', 'Increase indent', 32)}
          </div>
          <div class="row">
            <button type="button" class="on" aria-label="Align left" style="width: 32px">${icon('left')}</button>
            ${button('center', 'Center', 32)}
            ${button('right', 'Align right', 32)}
            ${button('justify', 'Justify', 32)}
            ${sep}
            ${button('spacing', 'Line spacing', 30)}
            ${chev(16)}
          </div>
          <div class="row">
            ${button('bucket', 'Shading', 32)}
            ${chev()}
            ${button('borders', 'Borders', 34)}
            ${chev()}
            ${sep}
            ${button('sort', 'Sort', 30)}
            ${sep}
            <button type="button" aria-label="Show marks" style="width: 28px; font-size: 20px">¶</button>
          </div>
          <div class="foot"><span>Paragraph</span>${button('launcher', 'Paragraph dialog', 14)}</div>
        </div>
        <div class="group styles">
          <button type="button" class="big">${icon('stylesA')}<span>Styles</span>${icon('smallChevron')}</button>
          <div class="foot"><span>Styles</span>${button('launcher', 'Styles dialog', 14)}</div>
        </div>
        <div class="group editing">
          <button type="button" class="big"><span class="box">${icon('find')}</span><span>Editing</span>${icon('smallChevron')}</button>
        </div>
      </div>
      <div class="page"><slot></slot></div>
      <div class="status">
        <span class="words">words</span>
        ${button('proof', 'Proofing', 64)}
        <button type="button" class="display">${icon('display')}Display Settings</button>
        <button type="button" aria-label="Read mode" style="width: 50px; margin-left: 12px">${icon('read')}</button>
        <button type="button" class="on" aria-label="Print layout" style="width: 50px">${icon('print')}</button>
        ${button('web', 'Web layout', 50)}
        ${button('minimize', 'Zoom out', 22, 12, 12)}
        <div class="zoom"><input type="range" aria-label="Zoom" value="50"></div>
      </div>`
  }
}
customElements.define('word-window', WordWindow)

class ShotTaskbar extends BaseElement {
  render () {
    return `
      <style>
        :host {
          display: flex;
          flex: none;
          height: 44px;
          background: #464646;
          color: #eee;
          font-size: 13px;
        }
        .start { width: 54px; }
        label {
          display: flex;
          align-items: center;
          gap: 12px;
          width: 430px;
          padding-left: 13px;
          border-bottom: 1px solid #ddd;
          background: #f0f0f0;
        }
        input { flex: 1; min-width: 0; padding: 0; border: 0; background: none; font: inherit; font-size: 15px; }
        input::placeholder { color: #555; opacity: 1; }
        .tray { display: flex; align-items: center; margin-left: auto; }
        time { width: 76px; text-align: center; line-height: 20px; }
        .end { width: 4px; height: 44px; margin-left: 6px; border-left: 1px solid #999; }
      </style>
      <button type="button" class="start" aria-label="Start">${icon('windows', 18, 18)}</button>
      <label>${icon('search', 19, 19)}<input type="text" aria-label="Search" placeholder="Type here to search"></label>
      <div class="tray">
        ${button('cloud', 'OneDrive', 36, 18, 13)}
        ${button('battery', 'Battery', 36, 18, 11)}
        ${button('sound', 'Volume', 36, 18, 16)}
        ${button('wifi', 'Network', 37, 15, 15)}
        ${button('penHand', 'Ink workspace', 42, 18, 19)}
        <time>12:15 PM<br>12/1/2021</time>
        ${button('notice', 'Notifications', 48, 28, 28)}
        <span class="end"></span>
      </div>`
  }
}
customElements.define('shot-taskbar', ShotTaskbar)

class InkLayer extends BaseElement {
  render () {
    return `
      <style>
        :host { position: absolute; left: 0; top: 0; pointer-events: none; }
        svg { display: block; }
      </style>
      <svg width="1920" height="990" viewBox="0 40 1920 990" fill="none" stroke="#000" stroke-linecap="round" stroke-linejoin="round" role="img" aria-label="Handwriting">
        <path fill="#000" stroke="none" d="M0 40H18Q35 50 58 57L72 61Q80 60 88 64L110 70L140 70Q157 72 157 82Q157 92 140 95L128 100Q122 107 116 104L85 103L66 106Q54 106 53 97L54 93Q46 90 46 84Q46 76 55 76Q20 66 0 47Z"/>
        <g stroke-width="9">
          <path d="M407 213Q421 230 428 245Q436 260 451 271M439 211Q436 232 426 255L411 295"/>
          <path stroke-width="10" d="M489 215Q503 218 514 223Q537 229 536 240Q534 251 520 252Q508 254 494 253"/>
          <path d="M599 199L588 195L575 199Q567 213 573 227Q580 232 590 233Q599 240 595 252Q590 264 580 266Q571 266 570 255"/>
          <path d="M723 183Q720 195 709 205L702 220M701 197Q712 207 723 210Q729 222 741 230"/>
          <path d="M775 188Q787 186 800 186M786 209Q796 207 807 203Q813 199 816 192"/>
          <path stroke-width="10" d="M863 156Q863 180 862 212"/>
          <path d="M889 173Q890 195 898 204Q903 209 908 200Q911 188 911 168Q909 162 899 166Q891 171 889 180"/>
          <path d="M843 237Q842 262 846 277L853 290M922 238Q910 247 898 250Q888 253 878 254M888 255Q889 266 896 269Q912 270 913 277Q909 287 897 287Q888 287 885 281"/>
          <path stroke-width="11" d="M833 350Q845 339 843 325Q834 323 824 334Q810 348 813 367Q820 377 835 376Q846 375 852 370"/>
          <path d="M888 316Q888 350 890 375M870 351Q888 350 903 345Q916 339 927 331M943 312Q930 326 926 345Q925 370 941 370Q957 367 967 353"/>
          <circle cx="988" cy="346" r="4" fill="#000" stroke="none"/>
          <path d="M384 455V470Q384 478 387 486"/>
          <path d="M438 442L436 480"/>
          <path d="M488 446L486 485"/>
          <path d="M539 445L536 482" stroke-width="11"/>
          <path d="M581 450V476M585 454H586" stroke-width="8"/>
          <path d="M631 450L633 482"/>
          <path d="M674 449L675 486"/>
        </g>
        <g stroke-width="7">
          <path d="M403 398Q410 399 418 394M431 388L432 414" stroke-width="6"/>
          <path d="M443 396L451 389L462 391Q465 404 458 414Q454 410 453 398L446 393"/>
          <path d="M626 392L628 421" stroke-width="5"/>
          <path d="M648 393Q658 394 665 402Q661 411 654 417Q649 410 649 394"/>
          <path d="M342 539Q352 538 356 528M370 515L377 547"/>
          <path d="M406 498L392 503L383 508L386 521Q398 523 398 532Q397 548 385 547"/>
          <path d="M458 527L468 522M506 499L494 504Q487 515 490 521Q507 521 507 529Q502 540 487 550"/>
          <ellipse cx="541" cy="530" rx="7" ry="24"/>
          <path d="M610 512L593 511Q579 522 585 530Q604 530 600 541Q596 554 587 552" stroke-width="8"/>
          <path d="M658 527L665 558M697 526L682 524Q672 536 674 543Q681 552 690 552Q696 560 686 562"/>
        </g>
      </svg>`
  }
}
customElements.define('ink-layer', InkLayer)

class PenToolbar extends BaseElement {
  render () {
    const tools = {
      penBlack: 'Black pen', penRed: 'Red pen', penBlue: 'Blue pen', penGreen: 'Green pen',
      penPurple: 'Purple pen', penSky: 'Light blue pen', marker: 'Highlighter', rubber: 'Eraser',
      ruler: 'Ruler', lasso: 'Lasso select', letter: 'Text', note: 'Note', picture: 'Image',
      insert: 'Insert', undo: 'Undo', redo: 'Redo'
    }
    return `
      <style>
        :host {
          display: flex;
          height: 60px;
          background: #fff;
          box-shadow: 0 0 10px rgba(0, 0, 0, .4);
        }
        button:first-of-type { background: #e4e4e4; }
      </style>
      ${Object.keys(tools).map(name => button(name, tools[name], 60)).join('')}`
  }
}
customElements.define('pen-toolbar', PenToolbar)

class TaskBar extends BaseElement {
  render () {
    return `
      <style>
        :host {
          display: flex;
          flex: none;
          height: 50px;
          background: linear-gradient(90deg, #464646 64%, #2a2a2a 65%, #2a2a2a 72%, #464646 80%);
          color: #fff;
          font-size: 14px;
          position: relative;
          z-index: 2;
        }
        .start { width: 60px; }
        label {
          display: flex;
          align-items: center;
          gap: 14px;
          width: 430px;
          padding-left: 14px;
          border: solid #aaa;
          border-width: 1px 0;
          background: #f0f0f0;
        }
        input { flex: 1; min-width: 0; padding: 0; border: 0; background: none; font: inherit; font-size: 17px; }
        input::placeholder { color: #333; opacity: 1; }
        .apps { display: flex; }
        .apps button:nth-child(3) { margin-left: 3px; }
        .apps button:nth-child(4) { background: linear-gradient(#9ddde0, #9ddde0) 7px 100% / 41px 3px no-repeat, linear-gradient(#5f9a9d, #5f9a9d) 48px 100% / 10px 3px no-repeat; }
        .apps button:nth-child(6) { background: linear-gradient(#9ddde0, #9ddde0) 7px 100% / 51px 3px no-repeat; }
        .apps button:nth-child(12) { background: linear-gradient(#9ddde0, #9ddde0) 0 100% / 100% 3px no-repeat, #595959; }
        .tray { display: flex; align-items: center; margin-left: auto; }
        .tray button { height: 50px; }
        .weather { gap: 13px; font-size: 17px; margin-right: 14px; }
        .ink button { background: #595959; }
        time { width: 82px; text-align: center; line-height: 23px; }
        .end { width: 6px; height: 50px; border-left: 1px solid #999; }
      </style>
      <button type="button" class="start" aria-label="Start">${icon('windows')}</button>
      <label>${icon('search')}<input type="text" aria-label="Search" placeholder="Type here to search"></label>
      <div class="apps">
        ${button('cortana', 'Cortana', 60)}
        ${button('taskView', 'Task view', 60)}
        ${button('edge', 'Edge', 62)}
        ${button('chrome', 'Chrome', 62)}
        ${button('mail', 'Mail', 62)}
        ${button('word', 'Word', 62)}
        ${button('files', 'File Explorer', 62)}
        ${button('acrobat', 'Acrobat', 62)}
        ${button('gear', 'Settings', 62)}
        ${button('calc', 'Calculator', 62)}
        ${button('quickAssist', 'Quick search', 62)}
        ${button('board', 'Whiteboard', 62)}
      </div>
      <div class="tray">
        <button type="button" class="weather">${icon('sun')}48°F</button>
        ${button('chevronUp', 'Hidden icons', 40, 18, 12)}
        ${button('cloud', 'OneDrive', 40)}
        ${button('battery', 'Battery', 40)}
        ${button('sound', 'Volume', 40)}
        ${button('wifi', 'Network', 40)}
        <div class="ink">${button('penHand', 'Ink workspace', 50)}</div>
        <time>12:17 PM<br>12/1/2021</time>
        ${button('notice', 'Notifications', 62)}
        <span class="end"></span>
      </div>`
  }
}
customElements.define('task-bar', TaskBar)
</script>
</body>
</html>
